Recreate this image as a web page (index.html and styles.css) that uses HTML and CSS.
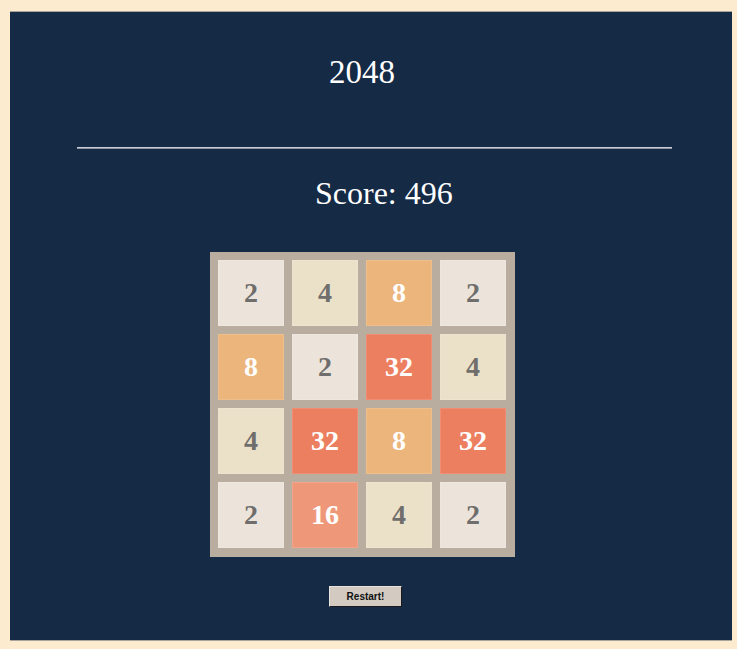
FILE: index.html
```html
<!DOCTYPE html>
<html>
<head>
<meta charset="utf-8">
<link rel="stylesheet" href="styles.css">
</head>
<body>
<div class="app">
  <h1 class="title">2048</h1>
  <hr class="rule">
  <div class="score">Score: 496</div>
  <div class="board">
    <div class="tile t2">2</div>
    <div class="tile t4">4</div>
    <div class="tile t8">8</div>
    <div class="tile t2">2</div>
    <div class="tile t8">8</div>
    <div class="tile t2">2</div>
    <div class="tile t32">32</div>
    <div class="tile t4">4</div>
    <div class="tile t4">4</div>
    <div class="tile t32">32</div>
    <div class="tile t8">8</div>
    <div class="tile t32">32</div>
    <div class="tile t2">2</div>
    <div class="tile t16">16</div>
    <div class="tile t4">4</div>
    <div class="tile t2">2</div>
  </div>
  <button class="restart">Restart!</button>
</div>
</body>
</html>
```
FILE: styles.css
```css
html, body {
  margin: 0;
  padding: 0;
  background: #fdebd0;
}
body {
  padding: 11px 5px 8px 10px;
}
.app {
  background: #142a45;
  border-top: 1px solid #a9a59c;
  border-bottom: 1px solid #a9a59c;
  height: 628px;
  display: flex;
  flex-direction: column;
  align-items: flex-start;
  font-family: "Liberation Serif", "Times New Roman", serif;
  color: #ffffff;
}
.title {
  margin: 41px 0 0 319px;
  font-size: 33px;
  font-weight: normal;
  line-height: 38px;
}
.rule {
  margin: 56px 0 0 67px;
  width: 595px;
  height: 0;
  border: none;
  border-top: 1px solid #c9ccd2;
  border-bottom: 1px solid #8c96a4;
}
.score {
  margin: 26px 0 0 305px;
  font-size: 32px;
  line-height: 37px;
}
.board {
  margin: 40px 0 0 200px;
  width: 305px;
  height: 305px;
  box-sizing: border-box;
  padding: 8px 8px 7px 8px;
  background: #b9ad9f;
  display: grid;
  grid-template-columns: repeat(4, 66px);
  grid-template-rows: repeat(4, 66px);
  gap: 8px;
}
.tile {
  display: flex;
  align-items: center;
  justify-content: center;
  font-size: 28px;
  font-weight: bold;
  color: #6f6e6c;
  box-sizing: border-box;
  border: 1px solid rgba(255,255,255,0.12);
}
.t2 { background: #ece4db; }
.t4 { background: #ebe1c9; }
.t8 { background: #ecb57c; color: #ffffff; }
.t16 { background: #ee9879; color: #ffffff; }
.t32 { background: #ed7f61; color: #ffffff; }
.restart {
  margin: 29px 0 0 319px;
  width: 73px;
  height: 21px;
  padding: 0;
  background: #d3cbc1;
  border: 1px solid;
  border-color: #e8e2da #1a1a1a #1a1a1a #e8e2da;
  font-family: "Liberation Sans", Arial, sans-serif;
  font-size: 10px;
  font-weight: bold;
  color: #111111;
}
```
